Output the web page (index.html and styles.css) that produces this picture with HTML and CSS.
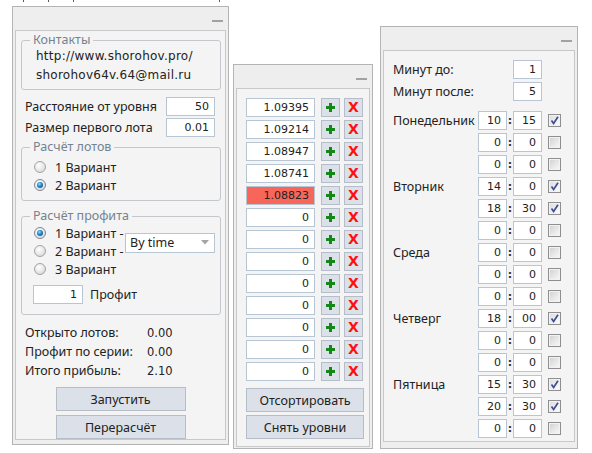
FILE: index.html
```html
<!DOCTYPE html>
<html lang="ru">
<head>
<meta charset="utf-8">
<title>Panels</title>
<link rel="stylesheet" href="styles.css">
</head>
<body>
<div class="ticks"><span class="tk tk1"></span><span class="tk tk2"></span><span class="tk tk3"></span><span class="tk tk4"></span></div>

<div class="win win-left">
  <div class="win-head"><span class="min"></span></div>
  <div class="win-body body-left">
    <div class="grp grp-contacts">
      <span class="legend">Контакты</span>
      <div class="mono">http://www.shorohov.pro/</div>
      <div class="mono">shorohov64v.64@mail.ru</div>
    </div>
    <div class="frow first"><span class="lbl">Расстояние от уровня</span><span class="edit e49">50</span></div>
    <div class="frow"><span class="lbl">Размер первого лота</span><span class="edit e49">0.01</span></div>

    <div class="grp grp-lots">
      <span class="legend">Расчёт лотов</span>
      <div class="rrow"><span class="radio"></span><span>1 Вариант</span></div>
      <div class="rrow"><span class="radio on"></span><span>2 Вариант</span></div>
    </div>

    <div class="grp grp-profit">
      <span class="legend">Расчёт профита</span>
      <div class="pgrid">
        <div class="rrow"><span class="radio on"></span><span>1 Вариант -</span></div>
        <div class="rrow r2"><span class="radio"></span><span>2 Вариант -</span></div>
        <div class="rrow r3"><span class="radio"></span><span>3 Вариант</span></div>
        <div class="combo"><span>By time</span><svg class="arrow" width="8" height="5" viewBox="0 0 8 5"><path d="M0 0 H8 L4 4.5 Z" fill="#a4a4a4"/></svg></div>
      </div>
      <div class="prow"><span class="edit e50">1</span><span class="plbl">Профит</span></div>
    </div>

    <div class="stats">
      <div class="srow"><span class="slbl">Открыто лотов:</span><span class="sval">0.00</span></div>
      <div class="srow"><span class="slbl">Профит по серии:</span><span class="sval">0.00</span></div>
      <div class="srow"><span class="slbl">Итого прибыль:</span><span class="sval">2.10</span></div>
    </div>

    <div class="btns">
      <div class="btn b130">Запустить</div>
      <div class="btn b130">Перерасчёт</div>
    </div>
  </div>
</div>

<div class="win win-mid">
  <div class="win-head"><span class="min"></span></div>
  <div class="win-body body-mid">
    <div class="levels">
      <div class="lrow"><span class="edit e69">1.09395</span><span class="sbtn plus"><svg width="9" height="9" viewBox="0 0 9 9"><path d="M3 0H6V3H9V6H6V9H3V6H0V3H3Z" fill="#14861a"/></svg></span><span class="sbtn del">X</span></div>
      <div class="lrow"><span class="edit e69">1.09214</span><span class="sbtn plus"><svg width="9" height="9" viewBox="0 0 9 9"><path d="M3 0H6V3H9V6H6V9H3V6H0V3H3Z" fill="#14861a"/></svg></span><span class="sbtn del">X</span></div>
      <div class="lrow"><span class="edit e69">1.08947</span><span class="sbtn plus"><svg width="9" height="9" viewBox="0 0 9 9"><path d="M3 0H6V3H9V6H6V9H3V6H0V3H3Z" fill="#14861a"/></svg></span><span class="sbtn del">X</span></div>
      <div class="lrow"><span class="edit e69">1.08741</span><span class="sbtn plus"><svg width="9" height="9" viewBox="0 0 9 9"><path d="M3 0H6V3H9V6H6V9H3V6H0V3H3Z" fill="#14861a"/></svg></span><span class="sbtn del">X</span></div>
      <div class="lrow"><span class="edit e69 hot">1.08823</span><span class="sbtn plus"><svg width="9" height="9" viewBox="0 0 9 9"><path d="M3 0H6V3H9V6H6V9H3V6H0V3H3Z" fill="#14861a"/></svg></span><span class="sbtn del">X</span></div>
      <div class="lrow"><span class="edit e69">0</span><span class="sbtn plus"><svg width="9" height="9" viewBox="0 0 9 9"><path d="M3 0H6V3H9V6H6V9H3V6H0V3H3Z" fill="#14861a"/></svg></span><span class="sbtn del">X</span></div>
      <div class="lrow"><span class="edit e69">0</span><span class="sbtn plus"><svg width="9" height="9" viewBox="0 0 9 9"><path d="M3 0H6V3H9V6H6V9H3V6H0V3H3Z" fill="#14861a"/></svg></span><span class="sbtn del">X</span></div>
      <div class="lrow"><span class="edit e69">0</span><span class="sbtn plus"><svg width="9" height="9" viewBox="0 0 9 9"><path d="M3 0H6V3H9V6H6V9H3V6H0V3H3Z" fill="#14861a"/></svg></span><span class="sbtn del">X</span></div>
      <div class="lrow"><span class="edit e69">0</span><span class="sbtn plus"><svg width="9" height="9" viewBox="0 0 9 9"><path d="M3 0H6V3H9V6H6V9H3V6H0V3H3Z" fill="#14861a"/></svg></span><span class="sbtn del">X</span></div>
      <div class="lrow"><span class="edit e69">0</span><span class="sbtn plus"><svg width="9" height="9" viewBox="0 0 9 9"><path d="M3 0H6V3H9V6H6V9H3V6H0V3H3Z" fill="#14861a"/></svg></span><span class="sbtn del">X</span></div>
      <div class="lrow"><span class="edit e69">0</span><span class="sbtn plus"><svg width="9" height="9" viewBox="0 0 9 9"><path d="M3 0H6V3H9V6H6V9H3V6H0V3H3Z" fill="#14861a"/></svg></span><span class="sbtn del">X</span></div>
      <div class="lrow"><span class="edit e69">0</span><span class="sbtn plus"><svg width="9" height="9" viewBox="0 0 9 9"><path d="M3 0H6V3H9V6H6V9H3V6H0V3H3Z" fill="#14861a"/></svg></span><span class="sbtn del">X</span></div>
      <div class="lrow"><span class="edit e69">0</span><span class="sbtn plus"><svg width="9" height="9" viewBox="0 0 9 9"><path d="M3 0H6V3H9V6H6V9H3V6H0V3H3Z" fill="#14861a"/></svg></span><span class="sbtn del">X</span></div>
    </div>
    <div class="btns mbtns">
      <div class="btn b118">Отсортировать</div>
      <div class="btn b118">Снять уровни</div>
    </div>
  </div>
</div>

<div class="win win-right">
  <div class="win-head"><span class="min"></span></div>
  <div class="win-body body-right">
    <div class="mrow"><span class="mlbl">Минут до:</span><span class="edit e29">1</span></div>
    <div class="mrow"><span class="mlbl">Минут после:</span><span class="edit e29">5</span></div>
    <div class="days">
      <div class="drow"><span class="dlbl">Понедельник</span><span class="edit e29">10</span><span class="colon">:</span><span class="edit e29">15</span><span class="cb on"><svg width="11" height="11" viewBox="0 0 11 11"><path d="M2.5 5.5 L4.6 8.4 L9 1.8" fill="none" stroke="#3c4f96" stroke-width="1.7"/></svg></span></div>
      <div class="drow"><span class="dlbl"></span><span class="edit e29">0</span><span class="colon">:</span><span class="edit e29">0</span><span class="cb"></span></div>
      <div class="drow"><span class="dlbl"></span><span class="edit e29">0</span><span class="colon">:</span><span class="edit e29">0</span><span class="cb"></span></div>
      <div class="drow"><span class="dlbl">Вторник</span><span class="edit e29">14</span><span class="colon">:</span><span class="edit e29">0</span><span class="cb on"><svg width="11" height="11" viewBox="0 0 11 11"><path d="M2.5 5.5 L4.6 8.4 L9 1.8" fill="none" stroke="#3c4f96" stroke-width="1.7"/></svg></span></div>
      <div class="drow"><span class="dlbl"></span><span class="edit e29">18</span><span class="colon">:</span><span class="edit e29">30</span><span class="cb on"><svg width="11" height="11" viewBox="0 0 11 11"><path d="M2.5 5.5 L4.6 8.4 L9 1.8" fill="none" stroke="#3c4f96" stroke-width="1.7"/></svg></span></div>
      <div class="drow"><span class="dlbl"></span><span class="edit e29">0</span><span class="colon">:</span><span class="edit e29">0</span><span class="cb"></span></div>
      <div class="drow"><span class="dlbl">Среда</span><span class="edit e29">0</span><span class="colon">:</span><span class="edit e29">0</span><span class="cb"></span></div>
      <div class="drow"><span class="dlbl"></span><span class="edit e29">0</span><span class="colon">:</span><span class="edit e29">0</span><span class="cb"></span></div>
      <div class="drow"><span class="dlbl"></span><span class="edit e29">0</span><span class="colon">:</span><span class="edit e29">0</span><span class="cb"></span></div>
      <div class="drow"><span class="dlbl">Четверг</span><span class="edit e29">18</span><span class="colon">:</span><span class="edit e29">00</span><span class="cb on"><svg width="11" height="11" viewBox="0 0 11 11"><path d="M2.5 5.5 L4.6 8.4 L9 1.8" fill="none" stroke="#3c4f96" stroke-width="1.7"/></svg></span></div>
      <div class="drow"><span class="dlbl"></span><span class="edit e29">0</span><span class="colon">:</span><span class="edit e29">0</span><span class="cb"></span></div>
      <div class="drow"><span class="dlbl"></span><span class="edit e29">0</span><span class="colon">:</span><span class="edit e29">0</span><span class="cb"></span></div>
      <div class="drow"><span class="dlbl">Пятница</span><span class="edit e29">15</span><span class="colon">:</span><span class="edit e29">30</span><span class="cb on"><svg width="11" height="11" viewBox="0 0 11 11"><path d="M2.5 5.5 L4.6 8.4 L9 1.8" fill="none" stroke="#3c4f96" stroke-width="1.7"/></svg></span></div>
      <div class="drow"><span class="dlbl"></span><span class="edit e29">20</span><span class="colon">:</span><span class="edit e29">30</span><span class="cb on"><svg width="11" height="11" viewBox="0 0 11 11"><path d="M2.5 5.5 L4.6 8.4 L9 1.8" fill="none" stroke="#3c4f96" stroke-width="1.7"/></svg></span></div>
      <div class="drow"><span class="dlbl"></span><span class="edit e29">0</span><span class="colon">:</span><span class="edit e29">0</span><span class="cb"></span></div>
    </div>
  </div>
</div>
</body>
</html>
```

FILE: styles.css
```css
* { box-sizing: border-box; }
html, body { margin: 0; padding: 0; }
body {
  width: 592px;
  height: 453px;
  background: #ffffff;
  position: relative;
  overflow: hidden;
  font-family: "Noto Sans", "DejaVu Sans", sans-serif;
  font-size: 12px;
  color: #222222;
}

/* fragments of text cut off at the top edge */
.ticks { position: absolute; top: 0; left: 0; width: 592px; height: 2px; }
.tk { position: absolute; top: 0; width: 1px; height: 2px; background: #5a5a5a; }
.tk1 { left: 23px; }
.tk2 { left: 48px; }
.tk3 { left: 73px; }
.tk4 { left: 219px; }

/* windows */
.win {
  position: absolute;
  border: 1px solid #b4b4b4;
  background: #eeeeee;
  display: flex;
  flex-direction: column;
}
.win-left { left: 12px; top: 6px; width: 217px; height: 439px; }
.win-mid { left: 233px; top: 64px; width: 140px; height: 385px; }
.win-right { left: 380px; top: 26px; width: 198px; height: 423px; }

.win-head {
  height: 23px;
  flex: none;
  display: flex;
  justify-content: flex-end;
  align-items: flex-start;
  padding: 13px 5px 0 0;
}
.min { width: 11px; height: 2px; background: #a2a2a2; }

.win-body {
  flex: none;
  margin: 0 2px;
  border: 1px solid #c8c8c8;
  background: #f4f4f4;
  display: flex;
  flex-direction: column;
}
.body-left { height: 410px; padding: 9px 4px 0 5px; }
.body-mid { height: 359px; padding: 9px 0 0 9px; }
.body-right { height: 392px; padding: 9px 0 0 9px; }

/* group boxes */
.grp {
  position: relative;
  border: 1px solid #c4c8cd;
  border-radius: 3px;
}
.legend {
  position: absolute;
  top: -9px;
  left: 8px;
  padding: 0 3px;
  background: #f4f4f4;
  color: #75828f;
  font-size: 12.5px;
  line-height: 16px;
}
.grp-contacts { padding: 6px 0 4px 14px; }
.mono {
  font-family: "DejaVu Sans", sans-serif;
  font-size: 12px;
  letter-spacing: 0.25px;
  line-height: 19px;
  color: #222;
}

.frow {
  height: 21px;
  display: flex;
  align-items: center;
  justify-content: space-between;
  padding: 0 6px 0 4px;
}
.frow.first { margin-top: 6px; }
.lbl { font-size: 12.5px; }

.edit {
  display: block;
  height: 19px;
  background: #ffffff;
  border: 1px solid #b8c6d3;
  text-align: right;
  padding-right: 5px;
  font-family: "DejaVu Sans", sans-serif;
  font-size: 11px;
  line-height: 17px;
  color: #222;
  flex: none;
}
.e49 { width: 49px; }
.e50 { width: 50px; }
.e69 { width: 69px; }
.e29 { width: 29px; }
.edit.hot { background: #f8665a; }

.grp-lots { margin-top: 9px; padding: 10px 0 6px 12px; }
.rrow {
  height: 18px;
  display: flex;
  align-items: center;
  font-size: 12.5px;
}
.radio {
  width: 12px;
  height: 12px;
  border-radius: 50%;
  border: 1px solid #a3a3a3;
  background: radial-gradient(circle at 40% 35%, #ffffff 0%, #e6e6e6 55%, #cfcfcf 100%);
  margin-right: 9px;
  flex: none;
  display: flex;
  align-items: center;
  justify-content: center;
}
.radio.on { border-color: #7d8896; }
.radio.on::after {
  content: "";
  width: 6px;
  height: 6px;
  border-radius: 50%;
  background: radial-gradient(circle at 40% 35%, #8fd8ff 0%, #1b7cc4 50%, #0b3f73 100%);
}

.grp-profit { margin-top: 15px; padding: 7px 5px 10px 0; }
.pgrid {
  display: grid;
  grid-template-columns: auto 1fr;
  grid-template-rows: 18px 18px 18px;
  padding-left: 12px;
}
.pgrid .r2 { grid-row: 2; grid-column: 1; }
.pgrid .r3 { grid-row: 3; grid-column: 1; }
.combo {
  grid-column: 2;
  grid-row: 1 / 3;
  align-self: center;
  justify-self: end;
  width: 90px;
  height: 20px;
  margin-top: 1px;
  background: #ffffff;
  border: 1px solid #b8c6d3;
  display: flex;
  align-items: center;
  justify-content: space-between;
  padding: 0 5px 0 4px;
  font-size: 12.5px;
}
.arrow { flex: none; }
.prow {
  margin-top: 7px;
  padding-left: 11px;
  display: flex;
  align-items: center;
}
.plbl { margin-left: 7px; font-size: 12.5px; }

.stats { margin-top: 8px; padding-left: 4px; }
.srow { height: 19px; display: flex; align-items: center; }
.slbl { width: 122px; font-size: 12.5px; }
.sval { font-family: "DejaVu Sans", sans-serif; font-size: 11.5px; }

.btns {
  display: flex;
  flex-direction: column;
  align-items: center;
  gap: 4px;
  margin-top: 7px;
}
.btn {
  height: 24px;
  background: #dce1e9;
  border: 1px solid #b5bdc8;
  display: flex;
  align-items: center;
  justify-content: center;
  font-size: 12.5px;
  color: #222;
}
.b130 { width: 130px; margin-left: -1px; }
.b118 { width: 118px; }
.mbtns { align-items: flex-start; gap: 3px; margin-top: 7px; }

/* middle levels */
.levels { display: flex; flex-direction: column; gap: 3px; }
.lrow { display: flex; align-items: center; height: 19px; }
.sbtn {
  width: 19px;
  height: 19px;
  background: #dce1e9;
  border: 1px solid #b5bdc8;
  display: flex;
  align-items: center;
  justify-content: center;
  flex: none;
}
.plus { margin-left: 6px; }
.del {
  margin-left: 4px;
  color: #ff1010;
  font-family: "DejaVu Sans", sans-serif;
  font-weight: bold;
  font-size: 14px;
  line-height: 17px;
}

/* right panel */
.mrow { display: flex; align-items: center; height: 19px; margin-bottom: 3px; }
.mlbl { width: 120px; font-size: 12.5px; }
.days { margin-top: 7px; display: flex; flex-direction: column; gap: 3px; }
.drow { display: flex; align-items: center; height: 19px; }
.dlbl { width: 85px; font-size: 12.5px; flex: none; }
.colon {
  width: 6px;
  text-align: center;
  font-family: "DejaVu Sans", sans-serif;
  font-weight: bold;
  font-size: 11px;
  line-height: 17px;
  color: #333;
  flex: none;
}
.cb {
  width: 13px;
  height: 13px;
  margin-left: 6px;
  border: 1px solid #8f8f8f;
  background: linear-gradient(135deg, #cfcfcf 0%, #e8e8e8 55%, #f8f8f8 100%);
  box-shadow: inset 0 0 0 1px #f2f2f2;
  display: flex;
  align-items: center;
  justify-content: center;
  flex: none;
}
.cb.on { background: linear-gradient(135deg, #dadada 0%, #efefef 55%, #fdfdfd 100%); }
```
